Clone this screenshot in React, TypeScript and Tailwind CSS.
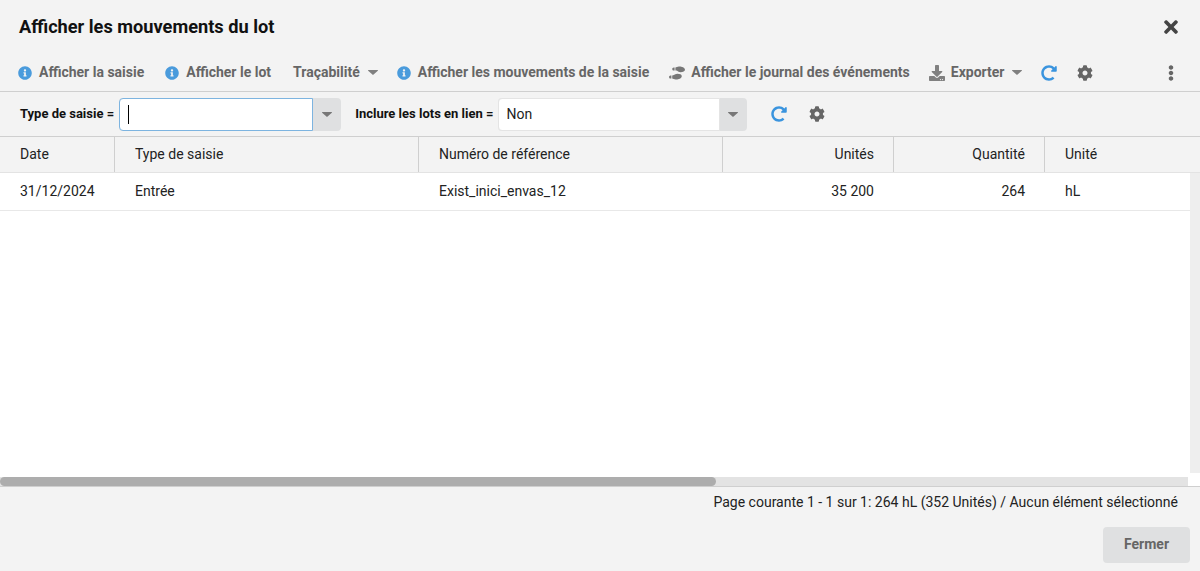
import { FaCog, FaDownload, FaEllipsisV, FaInfoCircle, FaRedoAlt, FaShoePrints, FaTimes } from 'react-icons/fa'

const COLUMNS = 'grid grid-cols-[115px_304px_304px_171px_151px_1fr]'

function Caret({ className }: { className: string }) {
  return (
    <svg width="10" height="5" viewBox="0 0 10 5" className={className}>
      <path d="M0.5 0h9a.5.5 0 0 1 .35.85L5 5 .15.85A.5.5 0 0 1 .5 0z" fill="currentColor" />
    </svg>
  )
}

function InfoAction({ label }: { label: string }) {
  return (
    <div className="flex items-center gap-[7px]">
      <FaInfoCircle className="text-[14px] text-[#4a9bdc]" />
      <span>{label}</span>
    </div>
  )
}

function ComboBox({ width, arrowWidth, value, focused }: { width: string; arrowWidth: string; value?: string; focused?: boolean }) {
  return (
    <div className={`flex h-[33px] rounded-[4px] bg-[#dfe0e1] ${width}`}>
      <div
        className={`flex flex-1 items-center rounded-l-[4px] border bg-white px-2 text-[14px] font-normal text-[#222] ${
          focused ? 'border-[#7db4e0]' : 'border-[#e4e4e4]'
        }`}
      >
        {focused ? <span className="h-[19px] w-px bg-black" /> : value}
      </div>
      <div className={`flex items-center justify-center ${arrowWidth}`}>
        <Caret className="text-[#777]" />
      </div>
    </div>
  )
}

function HeaderCell({ label, right }: { label: string; right?: boolean }) {
  return (
    <div className={`flex items-center border-r border-[#cfcfcf] px-5 last:border-r-0 ${right ? 'justify-end pr-[19px]' : ''}`}>
      {label}
    </div>
  )
}

export default function App() {
  return (
    <div className="flex h-[571px] w-[1200px] flex-col overflow-hidden bg-[#f3f3f3] font-['Roboto',sans-serif] text-[14px] text-[#222]">
      <div className="flex h-[54px] items-center justify-between pl-[19px] pr-[19px]">
        <h1 className="pb-px text-[18.2px] font-bold text-[#111]">Afficher les mouvements du lot</h1>
        <FaTimes className="text-[20px] text-[#444]" />
      </div>

      <div className="flex h-[38px] items-center border-b border-[#cfcfcf] pl-[18px] pr-[21px] font-bold text-[#666]">
        <div className="flex items-center gap-[21px]">
          <InfoAction label="Afficher la saisie" />
          <InfoAction label="Afficher le lot" />
          <div className="-mr-[2px] ml-px flex items-center gap-[8px]">
            <span>Traçabilité</span>
            <Caret className="text-[#808080]" />
          </div>
          <InfoAction label="Afficher les mouvements de la saisie" />
        </div>
        <div className="ml-[20px] flex items-center gap-[6px]">
          <FaShoePrints className="text-[16px] text-[#777]" />
          <span>Afficher le journal des événements</span>
        </div>
        <div className="ml-[19px] flex items-center gap-[6px]">
          <FaDownload className="text-[16px] text-[#808080]" />
          <div className="flex items-center gap-[8px]">
            <span>Exporter</span>
            <Caret className="text-[#808080]" />
          </div>
        </div>
        <FaRedoAlt className="ml-[19px] text-[16px] text-[#3a94de]" />
        <FaCog className="ml-[20px] text-[16px]" />
        <FaEllipsisV className="ml-auto text-[16px]" />
      </div>

      <div className="flex h-[45px] items-center border-b border-[#cfcfcf] pl-5 text-[13px] font-bold text-[#111]">
        <span className="mr-[5px]">Type de saisie =</span>
        <ComboBox width="w-[222px]" arrowWidth="w-[28px]" focused />
        <span className="ml-[14px] mr-[4px]">Inclure les lots en lien =</span>
        <ComboBox width="w-[249px]" arrowWidth="w-[27px]" value="Non" />
        <FaRedoAlt className="ml-[24px] text-[16px] text-[#3a94de]" />
        <FaCog className="ml-[22px] text-[16px] text-[#666]" />
      </div>

      <div className={`${COLUMNS} h-[36px] border-b border-[#e3e3e3]`}>
        <HeaderCell label="Date" />
        <HeaderCell label="Type de saisie" />
        <HeaderCell label="Numéro de référence" />
        <HeaderCell label="Unités" right />
        <HeaderCell label="Quantité" right />
        <HeaderCell label="Unité" />
      </div>

      <div className="flex min-h-0 flex-1 bg-white">
        <div className="flex-1">
          <div className={`${COLUMNS} h-[38px] border-b border-[#e8e8e8] text-[14px]`}>
            <div className="flex items-center px-5">31/12/2024</div>
            <div className="flex items-center px-5">Entrée</div>
            <div className="flex items-center px-5">Exist_inici_envas_12</div>
            <div className="flex items-center justify-end px-5">35 200</div>
            <div className="flex items-center justify-end px-5">264</div>
            <div className="flex items-center px-5">hL</div>
          </div>
        </div>
        <div className="mb-[4px] w-[10px] bg-[#eeeeee]" />
      </div>

      <div className="h-[9px] bg-white pr-[12px]">
        <div className="h-full bg-[#e3e3e3]">
          <div className="h-full w-[716px] rounded-full bg-[#adadad]" />
        </div>
      </div>

      <div className="flex h-[31px] items-center justify-end border-t border-[#cfcfcf] pr-[22px] text-[#222]">
        Page courante 1 - 1 sur 1: 264 hL (352 Unités) / Aucun élément sélectionné
      </div>

      <div className="flex h-[54px] justify-end pr-[10px] pt-[10px]">
        <button className="h-[36px] w-[87px] rounded-[4px] bg-[#dfe0e1] pb-px font-bold text-[#666]">Fermer</button>
      </div>
    </div>
  )
}
